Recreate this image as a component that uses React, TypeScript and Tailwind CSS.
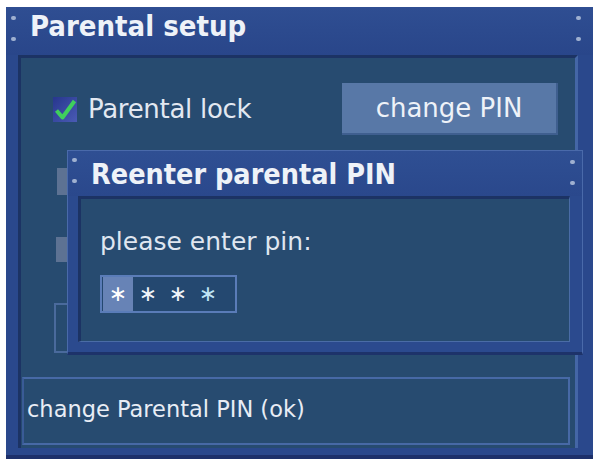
import React from 'react';

const Dots: React.FC<{ className: string }> = ({ className }) => (
  <div className={`absolute flex flex-col gap-[17px] ${className}`}>
    <span className="block w-[5px] h-[4px] rounded-full bg-[#9fb0d0]" />
    <span className="block w-[5px] h-[4px] rounded-full bg-[#9fb0d0]" />
  </div>
);

const CheckBox: React.FC = () => (
  <svg width="24" height="25" viewBox="0 0 24 25" className="shrink-0">
    <defs>
      <linearGradient id="cb" x1="0" y1="0" x2="1" y2="1">
        <stop offset="0" stopColor="#27368e" />
        <stop offset="1" stopColor="#4a5bb4" />
      </linearGradient>
    </defs>
    <rect x="0" y="0" width="24" height="25" fill="url(#cb)" />
    <path d="M3.5 13.5 L9.5 20.5 L21.5 4" fill="none" stroke="#3fcf5c" strokeWidth="4" strokeLinejoin="round" />
  </svg>
);

const App: React.FC = () => {
  const pin = ['∗', '∗', '∗', '∗'];
  return (
    <div className="w-[593px] h-[459px] bg-white pl-[6px] pt-[7px] font-['DejaVu_Sans',sans-serif] text-[#e2e8f1]">
      <div className="relative w-[587px] h-[452px] bg-[#2a488c] border-b-[4px] border-[#1d306a]">
        {/* title bar */}
        <div className="h-[48px] pl-[24px] pt-[5px] bg-gradient-to-b from-[#2f4e92] to-[#29468a]">
          <span className="block text-[29px] leading-none font-bold font-['DejaVu_Sans_Condensed','DejaVu_Sans',sans-serif] text-[#eef2f8]">
            Parental setup
          </span>
        </div>
        <Dots className="left-[5px] top-[9px]" />
        <Dots className="left-[570px] top-[9px]" />

        {/* main panel */}
        <div className="ml-[12px] w-[560px] h-[393px] bg-[#274b70] border-t-[3px] border-l-[3px] border-r-[3px] border-[#1c3364] border-r-[#4466a6] flex flex-col">
          <div className="flex items-center pl-[32px] pt-[25px]">
            <CheckBox />
            <span className="ml-[11px] text-[26px] leading-none tracking-[-0.3px]">Parental lock</span>
            <div className="ml-auto mr-[17px] w-[216px] h-[52px] bg-[#5878a7] border-r-2 border-b-2 border-[#3f5f8f] flex items-center justify-center">
              <span className="text-[26px] leading-none text-[#eef2f8]">change PIN</span>
            </div>
          </div>

          <div className="ml-[36px] mt-[33px] w-[10px] h-[27px] bg-[#5d7293]" />
          <div className="ml-[35px] mt-[42px] w-[11px] h-[25px] bg-[#5d7293]" />
          <div className="ml-[33px] mt-[41px] w-[14px] h-[50px] border-2 border-r-0 border-[#4a6a9c]" />

          <div className="ml-[1px] mt-[24px] w-[548px] h-[68px] border-2 border-[#4769a6] border-l-[#3a5b96] pl-[3px] pt-[19px]">
            <span className="block text-[22.5px] leading-none text-[#e8edf5]">
              change Parental PIN (ok)
            </span>
          </div>
        </div>

        {/* dialog */}
        <div className="absolute left-[61px] top-[143px] w-[516px] h-[205px] bg-[#2b4a8e] border border-[#4a6aaa] border-b-[3px] border-b-[#1d336a]">
          <div className="h-[45px] pl-[23px] pt-[10px] bg-gradient-to-b from-[#2f4f93] to-[#2a488c]">
            <span className="block text-[28.5px] leading-none font-bold font-['DejaVu_Sans_Condensed','DejaVu_Sans',sans-serif] text-[#eef2f8]">
              Reenter parental PIN
            </span>
          </div>
          <Dots className="left-[4px] top-[7px]" />
          <Dots className="left-[502px] top-[9px]" />
          <div className="ml-[10px] w-[492px] h-[146px] bg-[#274b70] border-t-[3px] border-l-[3px] border-r border-b border-[#1c3364] border-r-[#4a6ca6] border-b-[#4a6ca6] pl-[19px] pt-[30px]">
            <span className="block text-[25px] leading-none text-[#dfe6f0]">please enter pin:</span>
            <div className="mt-[21px] w-[137px] h-[38px] border-2 border-[#5a7cb8] bg-[#244870] flex items-stretch pl-[1px]">
              {pin.map((c, i) => (
                <span
                  key={i}
                  className={`w-[30px] flex items-center justify-center text-[22px] leading-none ${
                    i === 0 ? 'bg-[#6783b6] text-white' : i === 3 ? 'text-[#bfe4f6]' : 'text-[#f0f4fa]'
                  }`}
                >
                  {c}
                </span>
              ))}
            </div>
          </div>
        </div>
      </div>
    </div>
  );
};

export default App;
